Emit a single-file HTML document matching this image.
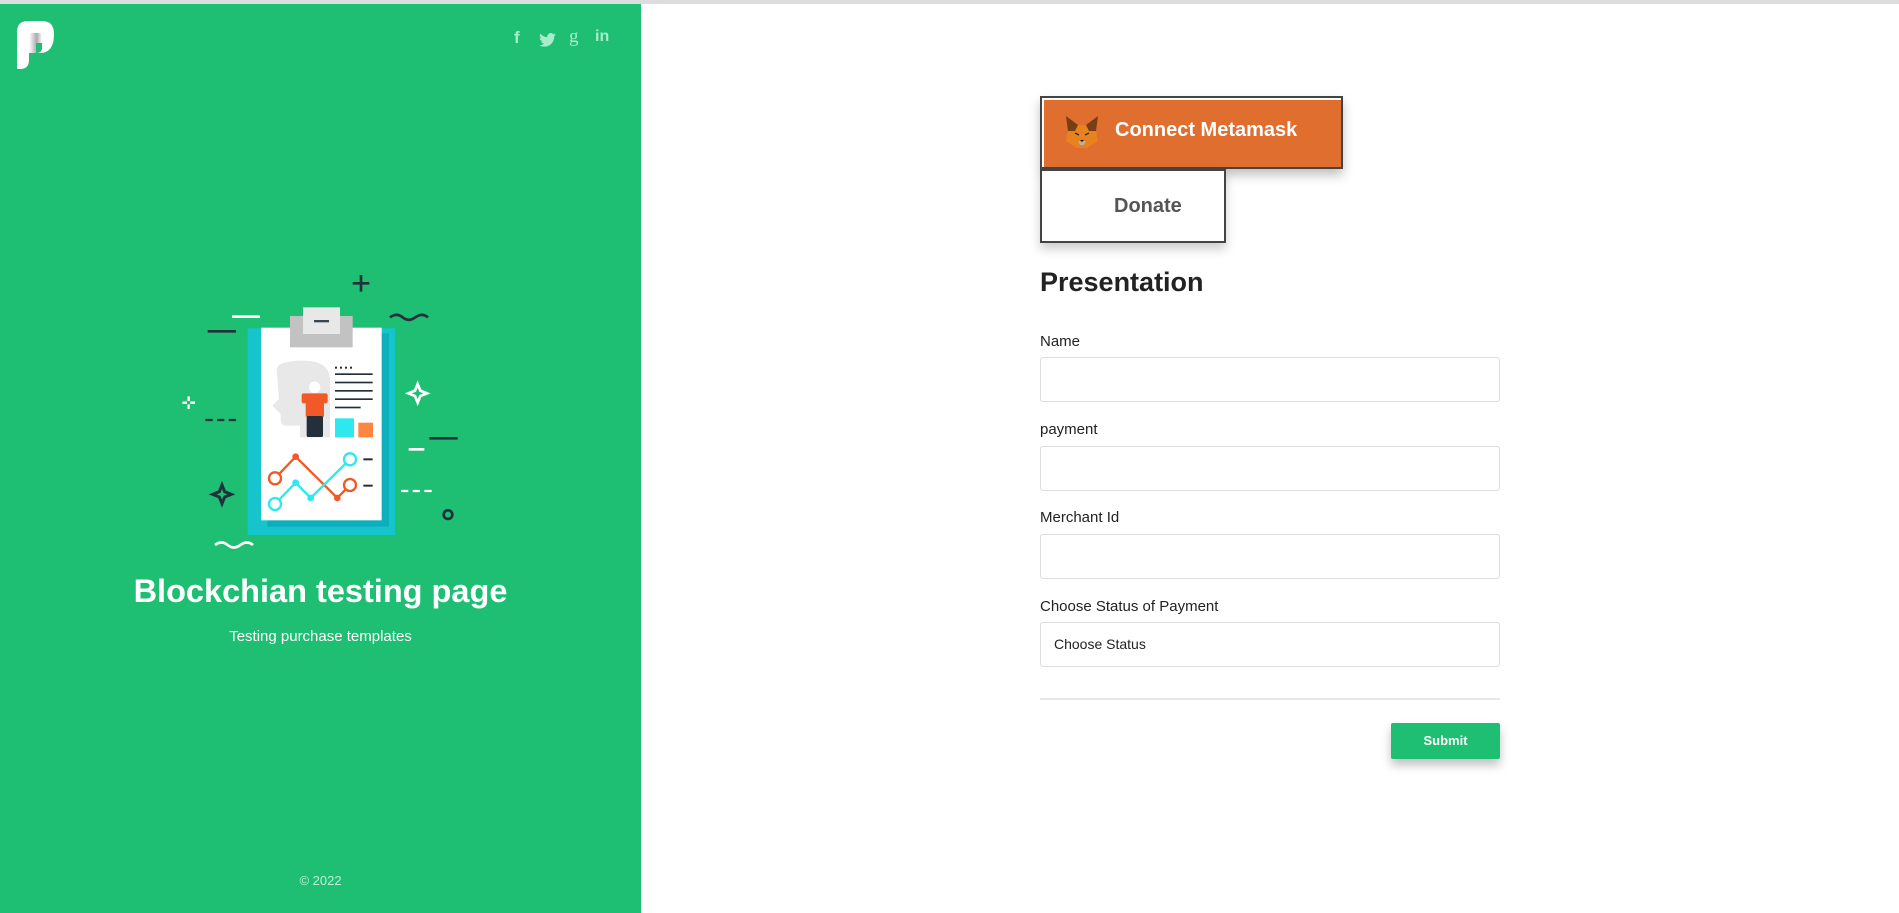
<!DOCTYPE html>
<html><head><meta charset="utf-8"><style>
*{margin:0;padding:0;box-sizing:border-box}
body{width:1899px;height:913px;overflow:hidden;background:#fff;font-family:"Liberation Sans",Arial,sans-serif;position:relative}
.top{position:absolute;left:0;top:0;width:1899px;height:4px;background:#ddd}
.left{position:absolute;left:0;top:4px;width:641px;height:909px;background:#1ebe73}
.abs{position:absolute}
.lbl{position:absolute;left:1040px;font-size:15px;color:#222}
.inp{position:absolute;left:1040px;width:460px;height:45px;border:1px solid #ddd;border-radius:3px;background:#fff}
</style></head><body>
<div class="top"></div>
<div class="left">
<svg class="abs" style="left:16px;top:16px" width="40" height="50" viewBox="0 0 40 50">
<defs><linearGradient id="g" x1="0" x2="1"><stop offset="0" stop-color="#fff"/><stop offset="0.6" stop-color="#aaa"/><stop offset="1" stop-color="#fff"/></linearGradient></defs>
<path d="M1 49 V12 Q1 1 12 1 H26 Q38 1 38 14 Q38 33 24 33 H13 Q13 20 14 16 Q15 13 17 13 H22 Q25 13 25 16 V21 Q25 23 23 23 H13 V40 Q13 49 4 49 Z" fill="#fff"/>
<path d="M13 33 V16 Q13 13 16 13 H24 Q26 13 26 16 V23 H20 V33 Z" fill="url(#g)"/>
<path d="M20 23 H26 V28 Q26 33 20 33 Z" fill="#1ebe73"/>
</svg>
<div class="abs" style="left:514px;top:24px;font-size:17px;color:#a8ecc9;font-weight:bold">f</div>
<svg class="abs" style="left:539px;top:29px" width="17" height="14" viewBox="0 0 24 20"><path d="M24 2.4a10 10 0 0 1-2.8.8A5 5 0 0 0 23.3.5a10 10 0 0 1-3.1 1.2A4.9 4.9 0 0 0 11.8 6 14 14 0 0 1 1.7.9a4.9 4.9 0 0 0 1.5 6.6A4.9 4.9 0 0 1 1 6.9a4.9 4.9 0 0 0 3.9 4.8 5 5 0 0 1-2.2.1 4.9 4.9 0 0 0 4.6 3.4A9.9 9.9 0 0 1 0 17.3 14 14 0 0 0 7.5 19.5c9 0 14-7.5 14-14v-.6A10 10 0 0 0 24 2.4z" fill="#a8ecc9"/></svg>
<div class="abs" style="left:569px;top:22px;font-size:19px;color:#a8ecc9;font-family:'Liberation Serif',serif">g</div>
<div class="abs" style="left:595px;top:24px;font-size:16px;color:#a8ecc9;font-weight:bold">in</div>
<svg class="abs" style="left:160px;top:256px" width="320" height="300" viewBox="0 0 960 900">
<g stroke-linecap="butt">
<path d="M578 70H628M603 45V95" stroke="#23303b" stroke-width="8"/>
<path d="M216 170H300" stroke="#fff" stroke-width="8"/>
<path d="M143 214H228" stroke="#23303b" stroke-width="8"/>
<path d="M690 172q20-15 38 0t38 0t38 0" stroke="#23303b" stroke-width="8" fill="none"/>
<path d="M165 855q20-15 38 0t38 0t38 0" stroke="#fff" stroke-width="8" fill="none"/>
<path d="M136 480H236" stroke="#23303b" stroke-width="7" stroke-dasharray="22 13"/>
<path d="M723 693H823" stroke="#fff" stroke-width="7" stroke-dasharray="22 13"/>
<path d="M808 535H893" stroke="#23303b" stroke-width="8"/>
<path d="M746 568H793" stroke="#fff" stroke-width="8"/>
<path d="M67 428H105M86 409V447" stroke="#fff" stroke-width="7" stroke-dasharray="14 10"/>
<path d="M773 372L781 392L801 400L781 408L773 428L765 408L745 400L765 392Z" fill="none" stroke="#fff" stroke-width="8"/>
<path d="M186 675L194 695L214 703L194 711L186 731L178 711L158 703L178 695Z" fill="none" stroke="#23303b" stroke-width="9"/>
<circle cx="864" cy="764" r="13" fill="none" stroke="#23303b" stroke-width="8"/>
</g>
<rect x="263" y="205" width="442" height="620" fill="#16c4cc"/>
<rect x="322" y="220" width="365" height="580" fill="#0eafbc"/>
<rect x="303" y="203" width="362" height="578" fill="#fff"/>
<rect x="390" y="168" width="188" height="94" fill="#c2c2c2"/>
<rect x="429" y="142" width="111" height="80" fill="#e8e8e8"/>
<rect x="462" y="180" width="45" height="7" fill="#3a4550"/>
<path d="M350 330q0-28 80-28q80 0 80 60v170h-90v-35h-40q-18 0-18-20v-15l-25-25l20-20z" fill="#e8e8e8"/>
<circle cx="464" cy="382" r="17" fill="#fff"/>
<rect x="425" y="400" width="78" height="30" rx="6" fill="#f05a28"/>
<rect x="437" y="420" width="55" height="50" fill="#f05a28"/>
<rect x="440" y="468" width="49" height="63" rx="5" fill="#23303b"/>
<g fill="#23303b"><rect x="525" y="320" width="6" height="6"/><rect x="540" y="320" width="6" height="6"/><rect x="555" y="320" width="6" height="6"/><rect x="570" y="320" width="6" height="6"/>
<rect x="525" y="340" width="113" height="5"/><rect x="525" y="365" width="113" height="5"/><rect x="525" y="390" width="113" height="5"/><rect x="525" y="415" width="113" height="5"/><rect x="525" y="440" width="77" height="5"/>
<rect x="610" y="595" width="28" height="6"/><rect x="610" y="674" width="28" height="6"/></g>
<rect x="525" y="475" width="57" height="57" fill="#2de8ec"/>
<rect x="595" y="488" width="44" height="44" fill="#ff8540"/>
<polyline points="345,655 407,590 532,714 570,675" fill="none" stroke="#f05a28" stroke-width="7"/>
<polyline points="345,732 407,668 452,714 570,598" fill="none" stroke="#2de8ec" stroke-width="7"/>
<circle cx="407" cy="590" r="10" fill="#f05a28"/><circle cx="532" cy="714" r="10" fill="#f05a28"/>
<circle cx="407" cy="668" r="10" fill="#2de8ec"/><circle cx="452" cy="714" r="10" fill="#2de8ec"/>
<circle cx="345" cy="655" r="18" fill="#fff" stroke="#f05a28" stroke-width="7"/><circle cx="570" cy="675" r="18" fill="#fff" stroke="#f05a28" stroke-width="7"/>
<circle cx="345" cy="732" r="18" fill="#fff" stroke="#2de8ec" stroke-width="7"/><circle cx="570" cy="598" r="18" fill="#fff" stroke="#2de8ec" stroke-width="7"/>
</svg>
<div class="abs" style="left:0;width:641px;top:569px;text-align:center;color:#fff;font-size:32.5px;font-weight:bold">Blockchian testing page</div>
<div class="abs" style="left:0;width:641px;top:624px;text-align:center;color:#fff;font-size:15px">Testing purchase templates</div>
<div class="abs" style="left:0;width:641px;top:869px;text-align:center;color:#bfeed6;font-size:13px">© 2022</div>
</div>

<div class="abs" style="left:1040px;top:96px;width:303px;height:73px;border:2px solid #444;background:#fff;box-shadow:0 6px 10px rgba(0,0,0,.25)">
<div style="position:absolute;left:2px;top:2px;right:0;bottom:0;background:#df6e2f"></div>
<svg class="abs" style="left:23px;top:17px" width="34" height="34" viewBox="0 0 34 34">
<path d="M1 1L13 10H21L33 1L31 16L33 26L22 33H12L1 26L3 16Z" fill="#e8821e"/>
<path d="M1 1L13 10L10 16L3 16Z" fill="#763d16"/><path d="M33 1L21 10L24 16L31 16Z" fill="#763d16"/>
<path d="M13 26H21L19 30H15Z" fill="#c0ad9e"/><path d="M15 25H19L17 27Z" fill="#161616"/>
<path d="M10 18L14 20M24 18L20 20" stroke="#233447" stroke-width="1.5"/>
</svg>
<div class="abs" style="left:73px;top:21px;color:#fff;font-size:20px;font-weight:bold">Connect Metamask</div>
</div>
<div class="abs" style="left:1040px;top:169px;width:186px;height:74px;border:2px solid #444;background:#fff;box-shadow:0 6px 10px rgba(0,0,0,.2)">
<div class="abs" style="left:72px;top:24px;color:#555;font-size:20px;font-weight:bold">Donate</div>
</div>
<div class="abs" style="left:1040px;top:267px;font-size:27px;font-weight:bold;color:#222">Presentation</div>

<div class="lbl" style="top:333px">Name</div>
<div class="inp" style="top:357px"></div>
<div class="lbl" style="top:421px">payment</div>
<div class="inp" style="top:446px"></div>
<div class="lbl" style="top:509px">Merchant Id</div>
<div class="inp" style="top:534px"></div>
<div class="lbl" style="top:598px">Choose Status of Payment</div>
<div class="inp" style="top:622px"><span style="position:absolute;left:13px;top:13px;font-size:14px;color:#222">Choose Status</span></div>
<div class="abs" style="left:1040px;top:698px;width:460px;height:2px;background:#e8e8e8"></div>
<div class="abs" style="left:1391px;top:723px;width:109px;height:36px;background:#1ebe73;border-radius:2px;box-shadow:0 6px 10px rgba(0,0,0,.25);color:#fff;font-weight:bold;font-size:13px;text-align:center;line-height:36px">Submit</div>
</body></html>
